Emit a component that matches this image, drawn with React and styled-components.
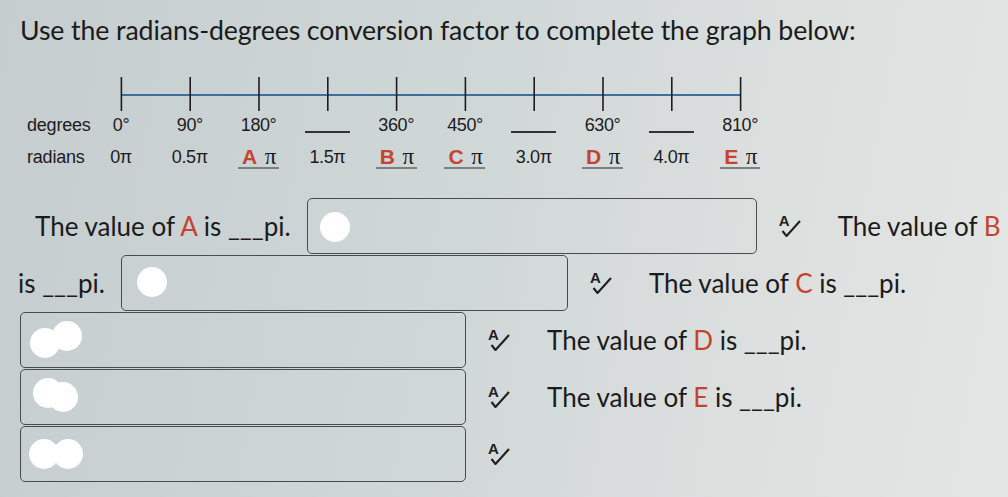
// Libraries
import React from 'react'
import styled, { createGlobalStyle, css } from 'styled-components'


// ============================================================================================================ Data

const TICK_GAP = 68.8

const degrees = ['0°', '90°', '180°', null, '360°', '450°', null, '630°', null, '810°']
const radians = ['0π', '0.5π', 'A', '1.5π', 'B', 'C', '3.0π', 'D', '4.0π', 'E']

const answerRows = [
    { indent: 35, lead: 'A', box: 450, dots: [{ x: 27, y: 28 }], tail: ['The value of ', 'B', ''] },
    { indent: 18, lead: 'is', box: 447, dots: [{ x: 30, y: 26 }], tail: ['The value of ', 'C', ' is ___pi.'] },
    { indent: 20, box: 446, dots: [{ x: 24, y: 30 }, { x: 46, y: 23 }], tail: ['The value of ', 'D', ' is ___pi.'] },
    { indent: 20, box: 446, dots: [{ x: 27, y: 23 }, { x: 42, y: 27 }], tail: ['The value of ', 'E', ' is ___pi.'] },
    { indent: 20, box: 446, dots: [{ x: 23, y: 27 }, { x: 47, y: 27 }], tail: null },
]


// ============================================================================================================ Logic

const NumberLine = () => {
    const width = TICK_GAP * degrees.length
    const first = TICK_GAP / 2
    const last = first + TICK_GAP * (degrees.length - 1)
    return (
        <AxisSvg width={width} height="40" viewBox={`0 0 ${width} 40`}>
            <line x1={first} y1="20" x2={last} y2="20" stroke="#3d6e9e" strokeWidth="2.2" />
            {degrees.map((_, i) => (
                <line key={i} x1={first + i * TICK_GAP} y1="2" x2={first + i * TICK_GAP} y2="36" stroke="#1d1d1d" strokeWidth="1.6" />
            ))}
        </AxisSvg>
    )
}

const SpellIcon = () => (
    <Spell>
        <SpellLetter>A</SpellLetter>
        <SpellCheck width="23" height="24" viewBox="0 0 23 24">
            <path d="M4.5 17 L8.5 22 L22 7" fill="none" stroke="#202020" strokeWidth="2.1" strokeLinejoin="round" />
        </SpellCheck>
    </Spell>
)

const Prompt = ({ letter, before = 'The value of ', after = ' is ___pi.' }) => (
    <PromptText>
        {before}<Letter>{letter}</Letter>{after}
    </PromptText>
)

const App = () => {
    return (
        <>
            <GlobalStyle />
            <Page>
                <Title>Use the radians-degrees conversion factor to complete the graph below:</Title>

                <Graph>
                    <GraphRow $kind="axis">
                        <RowLabel />
                        <NumberLine />
                    </GraphRow>
                    <GraphRow>
                        <RowLabel>degrees</RowLabel>
                        {degrees.map((d, i) => (
                            <Cell key={i}>{d ? d : <Blank />}</Cell>
                        ))}
                    </GraphRow>
                    <GraphRow $kind="radians">
                        <RowLabel>radians</RowLabel>
                        {radians.map((r, i) => (
                            <Cell key={i}>
                                {r.length === 1
                                    ? <Unknown><UnknownLetter>{r}</UnknownLetter><Pi>π</Pi></Unknown>
                                    : r}
                            </Cell>
                        ))}
                    </GraphRow>
                </Graph>

                <Answers>
                    {answerRows.map((row, i) => (
                        <AnswerRow key={i} $indent={row.indent}>
                            {row.lead === 'is' && <PromptText>is ___pi.</PromptText>}
                            {row.lead && row.lead !== 'is' && <Prompt letter={row.lead} />}
                            <AnswerBox $width={row.box}>
                                {row.dots.map((dot, j) => (
                                    <Dot key={j} $x={dot.x} $y={dot.y} />
                                ))}
                            </AnswerBox>
                            <SpellIcon />
                            {row.tail && <Prompt before={row.tail[0]} letter={row.tail[1]} after={row.tail[2]} />}
                        </AnswerRow>
                    ))}
                </Answers>
            </Page>
        </>
    )
}


// ============================================================================================================ Styles

const GlobalStyle = createGlobalStyle`
    html, body {
        margin: 0;
        padding: 0;
        background: #d3d9d9;
    }
`

const Page = styled.div`
    width: 1008px;
    height: 497px;
    overflow: hidden;
    box-sizing: border-box;
    padding-top: 14px;
    background: linear-gradient(100deg, #c6cdcf 0%, #d0d7d7 45%, #dee1e0 80%, #e4e6e5 100%);
    color: #1a1b1b;
    font-family: Lato, 'Open Sans', sans-serif;
`

const Title = styled.h1`
    margin: 0 0 0 20px;
    font-size: 26.7px;
    line-height: 32px;
    font-weight: 400;
    white-space: nowrap;
    letter-spacing: -0.1px;
`

const Graph = styled.div`
    margin-top: 29px;
    padding-left: 27px;
    font-family: 'Liberation Sans', Arial, sans-serif;
    font-size: 18px;
    color: #1c1c1c;
`

const GraphRow = styled.div`
    display: flex;
    align-items: flex-start;
    height: 20px;

    ${({ $kind }) => $kind === 'axis' && css`
        height: 40px;
    `}

    ${({ $kind }) => $kind === 'radians' && css`
        margin-top: 12px;
        height: 24px;
    `}
`

const RowLabel = styled.div`
    width: 59.6px;
    flex: none;
    line-height: 20px;
    letter-spacing: -0.2px;
`

const AxisSvg = styled.svg`
    display: block;
    flex: none;
`

const Cell = styled.div`
    width: ${TICK_GAP}px;
    flex: none;
    display: flex;
    justify-content: center;
    line-height: 20px;
    letter-spacing: -0.4px;
`

const Blank = styled.span`
    display: block;
    width: 45px;
    height: 16px;
    border-bottom: 2px solid #333;
`

const Unknown = styled.span`
    display: inline-flex;
    align-items: baseline;
    gap: 8px;
    padding: 0 3px 0 4px;
    border-bottom: 2px solid #7c8080;
    line-height: 20px;
`

const UnknownLetter = styled.span`
    color: #c5442f;
    font-size: 21px;
    font-weight: 700;
`

const Pi = styled.span`
    font-family: 'Liberation Serif', 'Times New Roman', serif;
    font-size: 23px;
`

const Answers = styled.div`
    margin-top: 27px;
    display: flex;
    flex-direction: column;
    gap: 1px;
`

const AnswerRow = styled.div`
    display: flex;
    align-items: center;
    height: 56px;
    padding-left: ${({ $indent }) => $indent}px;
    white-space: nowrap;
`

const PromptText = styled.span`
    font-size: 26px;
    line-height: 30px;
    margin-right: 16px;

    &:last-child {
        margin-left: 37px;
        margin-right: 0;
    }
`

const Letter = styled.span`
    color: #c5442f;
`

const AnswerBox = styled.div`
    position: relative;
    flex: none;
    width: ${({ $width }) => $width}px;
    height: 56px;
    box-sizing: border-box;
    border: 1.5px solid #474c4d;
    border-radius: 5px;
`

const Dot = styled.span`
    position: absolute;
    left: ${({ $x }) => $x - 15}px;
    top: ${({ $y }) => $y - 15}px;
    width: 30px;
    height: 30px;
    border-radius: 50%;
    background: #fff;
`

const Spell = styled.span`
    position: relative;
    flex: none;
    display: block;
    width: 23px;
    height: 24px;
    margin-left: 21px;
`

const SpellLetter = styled.span`
    display: block;
    padding-left: 1px;
    font-family: 'Liberation Sans', Arial, sans-serif;
    font-size: 15px;
    font-weight: 700;
    line-height: 14px;
    color: #202020;
`

const SpellCheck = styled.svg`
    position: absolute;
    left: 0;
    top: 0;
`

export default App
